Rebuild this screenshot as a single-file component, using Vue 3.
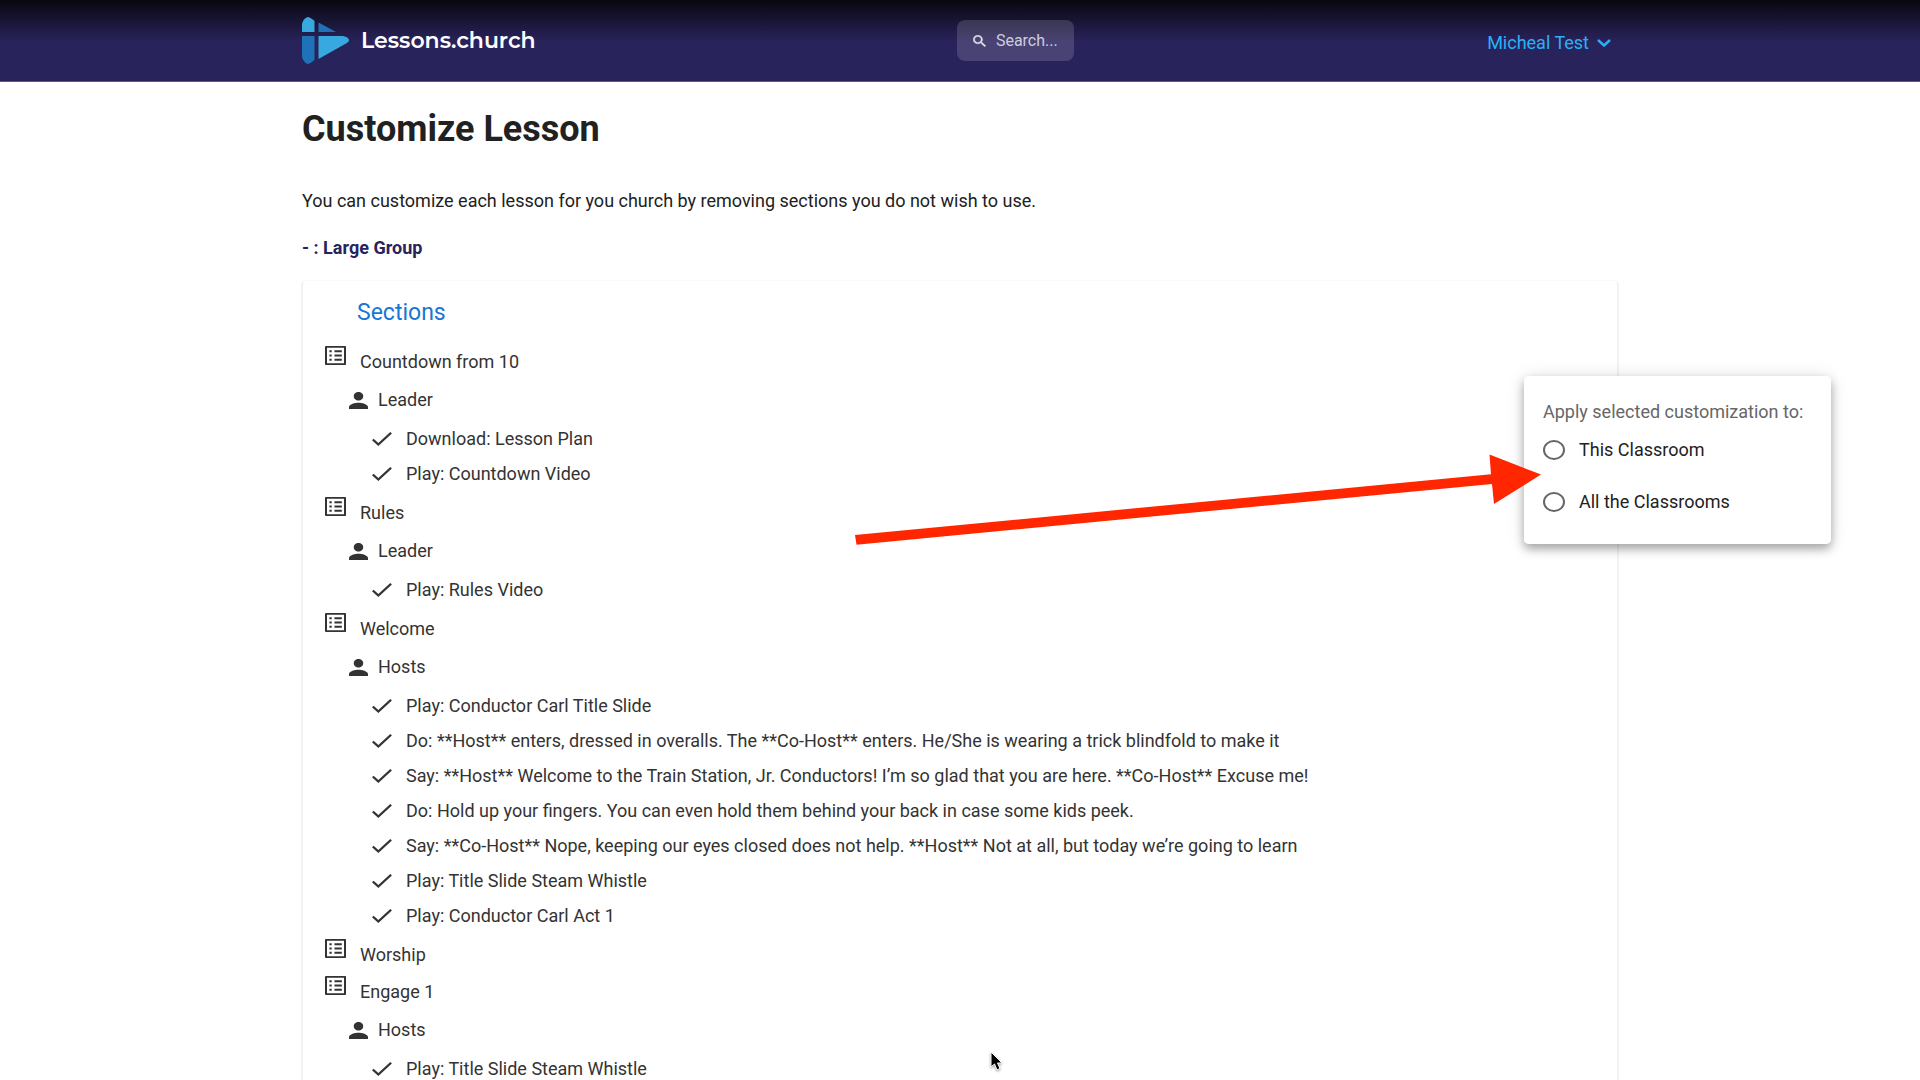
<template>
  <div class="page">
    <header class="header">
      <div class="container header-inner">
        <a href="#" class="brand">
          <svg class="logo" width="48" height="48" viewBox="0 0 48 48" aria-hidden="true">
            <path d="M0 15V7Q1 2 5.500 0Q8 0 12.500 4V15Z" fill="#38a8e0" />
            <path d="M0 19H12.500V43Q9 46 6 47Q2 46 0 40Z" fill="#1f72b8" />
            <path d="M16.500 5.500L34 15H16.500Z" fill="#1f72b8" />
            <path d="M16.500 19H41Q47 20 47 23.500Q47 25 44 26.500L16.500 42Z" fill="#38a8e0" />
          </svg>
          <span>Lessons.church</span>
        </a>
        <label class="search">
          <svg width="13" height="12" viewBox="2.700 2.700 18.100 18.100" preserveAspectRatio="none" aria-hidden="true">
            <path fill="currentColor" stroke="currentColor" stroke-width="0.600" d="M15.500 14h-.79l-.28-.27A6.471 6.471 0 0 0 16 9.500 6.500 6.500 0 1 0 9.500 16c1.610 0 3.090-.59 4.230-1.570l.27.28v.79l5 4.990L20.490 19l-4.990-5zm-6 0C7.010 14 5 11.990 5 9.500S7.010 5 9.500 5 14 7.010 14 9.500 11.990 14 9.500 14z" />
          </svg>
          <input v-model="query" type="text" placeholder="Search..." aria-label="Search" />
        </label>
        <button type="button" class="user-menu">
          <span>Micheal Test</span>
          <svg width="14" height="8" viewBox="0 0 14 8" aria-hidden="true">
            <path d="M1 1l6 5.500L13 1" fill="none" stroke="currentColor" stroke-width="2.400" />
          </svg>
        </button>
      </div>
    </header>

    <main class="container">
      <h1>Customize Lesson</h1>
      <p class="intro">You can customize each lesson for you church by removing sections you do not wish to use.</p>
      <h2>- : Large Group</h2>

      <div class="card">
        <h3>Sections</h3>
        <div v-for="section in sections" :key="section.name" class="section">
          <button type="button" class="row section-row">
            <svg width="21" height="19" viewBox="2 2 20 20" preserveAspectRatio="none" aria-hidden="true">
              <path fill="currentColor" d="M21.100 2H2.900C2.400 2 2 2.400 2 2.900v18.200c0 .5.400.9.900.9h18.200c.5 0 .9-.4.9-.9V2.900c0-.5-.4-.9-.9-.9zM20.100 20.100H3.900V3.900h16.200zM11 6.500h7v2.100h-7zm0 4.400h7v2.100h-7zm0 4.400h7v2.100h-7zM6.200 6.500h2.200v2.100H6.200zm0 4.400h2.200v2.100H6.200zm0 4.400h2.200v2.100H6.200z" />
            </svg>
            <span>{{ section.name }}</span>
          </button>
          <template v-if="section.role">
            <button type="button" class="row role-row">
              <svg width="19" height="17" viewBox="4 4 16 16" preserveAspectRatio="none" aria-hidden="true">
                <path fill="currentColor" d="M12 12c2.210 0 4-1.790 4-4s-1.790-4-4-4-4 1.790-4 4 1.790 4 4 4zm0 2c-2.670 0-8 1.340-8 4v2h16v-2c0-2.660-5.330-4-8-4z" />
              </svg>
              <span>{{ section.role }}</span>
            </button>
            <ul class="actions">
              <li v-for="action in section.actions" :key="action">
                <button type="button" class="row action-row">
                  <svg width="20" height="14" viewBox="3.400 5.500 17.700 13.600" preserveAspectRatio="none" aria-hidden="true">
                    <path fill="currentColor" d="M9 16.170L4.830 12l-1.420 1.410L9 19 21 7l-1.410-1.410z" />
                  </svg>
                  <span>{{ action }}</span>
                </button>
              </li>
            </ul>
          </template>
        </div>
      </div>
    </main>

    <fieldset class="apply-box">
      <legend>Apply selected customization to:</legend>
      <label v-for="option in options" :key="option.value">
        <input v-model="applyTo" type="radio" name="applyTo" :value="option.value" />
        <span>{{ option.label }}</span>
      </label>
    </fieldset>

    <svg class="arrow" width="688" height="92" viewBox="0 0 688 92" aria-hidden="true">
      <path d="M2 82L638 21.300L636.500 1.500L688 21.500L641 51L639 31L3.500 91.700Z" fill="#ff2600" />
    </svg>

    <svg class="cursor" width="18" height="24" viewBox="0 0 18 24" aria-hidden="true">
      <path d="M2 2V17L5.500 14L8 20L11 18.500L8.500 13H13Z" fill="#000" stroke="#fff" stroke-width="1" />
    </svg>
  </div>
</template>

<script setup>
import { ref } from 'vue'

const query = ref('')
const applyTo = ref('')

const options = [
  { value: 'classroom', label: 'This Classroom' },
  { value: 'all', label: 'All the Classrooms' }
]

const sections = [
  {
    name: 'Countdown from 10',
    role: 'Leader',
    actions: ['Download: Lesson Plan', 'Play: Countdown Video']
  },
  {
    name: 'Rules',
    role: 'Leader',
    actions: ['Play: Rules Video']
  },
  {
    name: 'Welcome',
    role: 'Hosts',
    actions: [
      'Play: Conductor Carl Title Slide',
      'Do: **Host** enters, dressed in overalls. The **Co-Host** enters. He/She is wearing a trick blindfold to make it',
      'Say: **Host** Welcome to the Train Station, Jr. Conductors! I’m so glad that you are here. **Co-Host** Excuse me!',
      'Do: Hold up your fingers. You can even hold them behind your back in case some kids peek.',
      'Say: **Co-Host** Nope, keeping our eyes closed does not help. **Host** Not at all, but today we’re going to learn',
      'Play: Title Slide Steam Whistle',
      'Play: Conductor Carl Act 1'
    ]
  },
  { name: 'Worship' },
  {
    name: 'Engage 1',
    role: 'Hosts',
    actions: ['Play: Title Slide Steam Whistle']
  }
]
</script>

<style>
body {
  margin: 0;
  background: #fff;
}
</style>

<style scoped>
.page {
  position: relative;
  height: 100vh;
  overflow: hidden;
  font-family: Roboto, "Liberation Sans", sans-serif;
  font-size: 18px;
  line-height: 24px;
  color: #212121;
}

.container {
  max-width: 1316px;
  margin: 0 auto;
}

button,
input {
  font: inherit;
  color: inherit;
}

button {
  padding: 0;
  border: 0;
  background: none;
  cursor: pointer;
}

svg {
  display: block;
  flex: none;
}

/* 상단 헤더 */
.header {
  background: linear-gradient(#08070f, #29235c 42px);
  border-bottom: 1px solid #5d5884;
}

.header-inner {
  display: flex;
  justify-content: space-between;
  align-items: center;
  height: 81px;
}

.brand {
  display: flex;
  align-items: center;
  gap: 11px;
  font-family: Montserrat, Inter, sans-serif;
  font-size: 22px;
  font-weight: 600;
  color: #fff;
  text-decoration: none;
}

.search {
  display: flex;
  align-items: center;
  gap: 10px;
  box-sizing: border-box;
  width: 117px;
  height: 41px;
  margin-left: 8px;
  padding: 0 12px 0 16px;
  border-radius: 8px;
  background: rgba(255, 255, 255, 0.15);
  color: #e4e2ee;
  font-size: 16px;
}

.search input {
  width: 100%;
  min-width: 0;
  padding: 0;
  border: 0;
  outline: 0;
  background: none;
}

.search input::placeholder {
  color: #cfccdc;
  opacity: 1;
}

.user-menu {
  display: flex;
  align-items: center;
  gap: 8px;
  padding: 5px 7px 0 0;
  color: #29b1f7;
}

h1 {
  margin: 24px 0 0;
  font-size: 36px;
  line-height: 46px;
  font-weight: 700;
}

.intro {
  margin: 37px 0 0;
}

h2 {
  margin: 23px 0 0;
  font-size: 18px;
  line-height: 24px;
  font-weight: 700;
  color: #29235c;
}

/* 섹션 카드 */
.card {
  box-sizing: border-box;
  min-height: 820px;
  margin: 20px -1px 0;
  padding: 20px 22px;
  border: 2px solid #f2f2f2;
  border-top: 1px solid #fafafa;
  border-radius: 5px;
  color: #333;
}

h3 {
  margin: 0 0 19px;
  padding-left: 32px;
  font-size: 23px;
  line-height: 24px;
  font-weight: 400;
  color: #1976d2;
}

.row {
  display: flex;
  align-items: center;
  text-align: left;
}

.section-row {
  align-items: flex-start;
  gap: 14px;
  height: 37px;
}

.section-row svg {
  margin-top: 2px;
}

.section-row span {
  padding-top: 6px;
}

.role-row {
  gap: 10px;
  height: 38px;
  padding-left: 24px;
}

.actions {
  list-style: none;
  margin: 0;
  padding: 2px 0 4px 47px;
}

.action-row {
  gap: 14px;
  height: 35px;
}

/* 적용 대상 선택 */
.apply-box {
  position: absolute;
  top: 376px;
  right: 89px;
  box-sizing: border-box;
  width: 307px;
  margin: 0;
  padding: 24px 19px 22px;
  border: 0;
  border-radius: 5px;
  background: #fff;
  box-shadow: 0 5px 10px rgba(0, 0, 0, 0.3), 0 1px 18px rgba(0, 0, 0, 0.12);
}

.apply-box legend {
  float: left;
  width: 100%;
  padding: 0;
  white-space: nowrap;
  color: #666;
}

.apply-box label {
  display: flex;
  clear: both;
  align-items: center;
  gap: 14px;
  height: 52px;
}

.apply-box label + label {
  height: 40px;
  padding-top: 6px;
}

.apply-box input {
  appearance: none;
  flex: none;
  width: 22px;
  height: 20px;
  margin: 0;
  border: 2px solid #666;
  border-radius: 50%;
}

.apply-box input:checked {
  background: #1976d2;
}

.arrow {
  position: absolute;
  top: 453px;
  right: 379px;
  pointer-events: none;
}

.cursor {
  position: absolute;
  left: 989px;
  top: 1050px;
  pointer-events: none;
  filter: drop-shadow(0 1px 1px rgba(0, 0, 0, 0.4));
}
</style>
